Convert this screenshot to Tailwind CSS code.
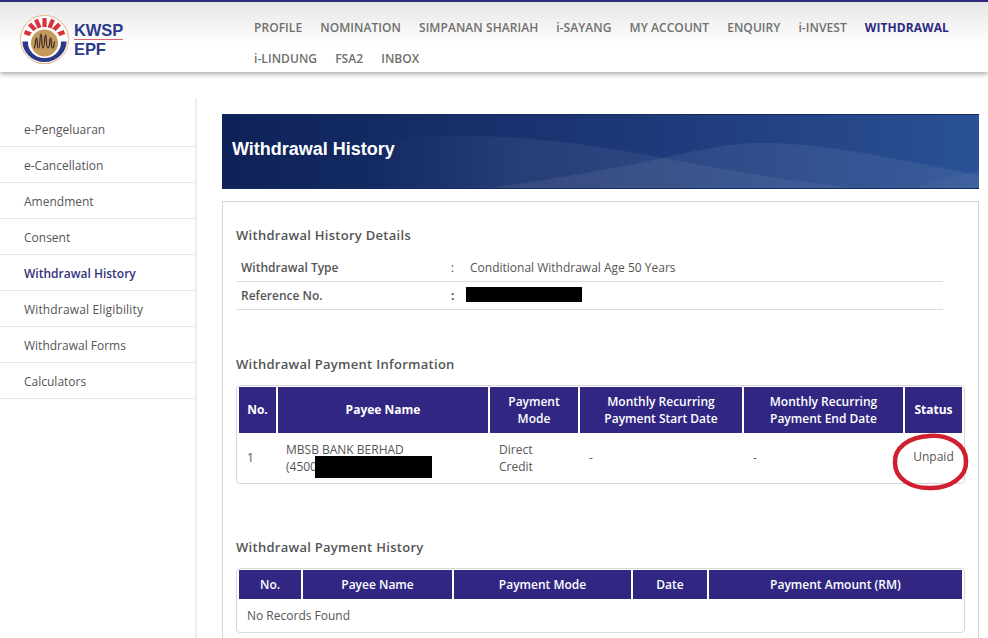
<!DOCTYPE html>
<html lang="en">
<head>
    <meta charset="UTF-8">
    <title>Withdrawal History</title>
    <script src="https://cdn.jsdelivr.net/npm/@tailwindcss/browser@4"></script>
</head>
<body class="bg-white h-[638px] overflow-hidden font-['Open_Sans','Noto_Sans',sans-serif] text-[12px] text-[#555]">
    <!-- header -->
    <header class="h-[72px] border-t-2 border-[#2e2a7f] bg-gradient-to-b from-[#e6e6e6] to-white to-60% shadow-[0_2px_5px_rgba(0,0,0,0.35)] flex">
        <div class="w-[254px] flex items-center pl-[20px] pt-[5px] gap-[5px]">
            <svg width="49" height="49" viewBox="0 0 49 49">
                <circle cx="24.5" cy="24.5" r="24.5" fill="#e9bf94"/>
                <circle cx="24.5" cy="24.5" r="23.3" fill="#fff"/>
                <g stroke="#d8343f" stroke-width="4.200">
                    <path d="M24.5 24.500V3"/>
                    <path d="M24.500 24.500L16 4.500M24.500 24.500L33 4.500"/>
                    <path d="M24.500 24.500L9.500 9M24.500 24.500L39.500 9"/>
                    <path d="M24.500 24.500L4.500 17M24.500 24.500L44.500 17"/>
                </g>
                <path d="M2.300 26.500a22.200 22.200 0 0 0 44.400 0z" fill="#2d3a8c"/>
                <circle cx="24.500" cy="24.500" r="23.300" fill="none" stroke="#fff" stroke-width="1.400"/>
                <circle cx="24.500" cy="24.500" r="24" fill="none" stroke="#e9bf94" stroke-width="1"/>
                <ellipse cx="24.500" cy="27.500" rx="16.500" ry="15.500" fill="#fff"/>
                <circle cx="24.500" cy="28" r="13.500" fill="#c49a5c"/>
                <path d="M14 33c2-1 1-10 2.500-10s0 10 2 10 1-14 2.500-14 0 14 2 14 1-13 2.500-13 0 13 2.500 13 1-10 2.500-10 0 10 2 10 1-7 2.500-6" fill="none" stroke="#3a2a2a" stroke-width="1.200"/>
            </svg>
            <div class="font-['Liberation_Sans',sans-serif] font-bold text-[#2d3a8c] text-[16.5px] leading-[19px] tracking-[-0.1px]">
                <div class="border-b border-[#d8606a] w-[49px] h-[19px]">KWSP</div>
                <div class="h-[19px]">EPF</div>
            </div>
        </div>
        <nav class="flex-1 text-[12px] font-semibold text-[#6f6f6f] pt-[17px] tracking-[0.06px]">
            <div class="flex gap-[18px] h-[31px]">
                <span>PROFILE</span><span>NOMINATION</span><span>SIMPANAN SHARIAH</span><span>i-SAYANG</span><span>MY ACCOUNT</span><span>ENQUIRY</span><span>i-INVEST</span><span class="text-[#2e2a7f] font-bold">WITHDRAWAL</span>
            </div>
            <div class="flex gap-[18px]">
                <span>i-LINDUNG</span><span>FSA2</span><span>INBOX</span>
            </div>
        </nav>
    </header>

    <div class="flex">
        <!-- sidebar -->
        <aside class="w-[197px] h-[540px] mt-[26px] border-r-2 border-[#eeeeee] pt-[13px] shrink-0">
            <a class="flex items-center h-[36px] pl-[24px] pt-[2px] border-b border-[#e6e6e6]">e-Pengeluaran</a>
            <a class="flex items-center h-[36px] pl-[24px] pt-[2px] border-b border-[#e6e6e6]">e-Cancellation</a>
            <a class="flex items-center h-[36px] pl-[24px] pt-[2px] border-b border-[#e6e6e6]">Amendment</a>
            <a class="flex items-center h-[36px] pl-[24px] pt-[2px] border-b border-[#e6e6e6]">Consent</a>
            <a class="flex items-center h-[36px] pl-[24px] pt-[2px] border-b border-[#e6e6e6] font-semibold text-[#33337a]">Withdrawal History</a>
            <a class="flex items-center h-[36px] pl-[24px] pt-[2px] border-b border-[#e6e6e6] tracking-[0.15px]">Withdrawal Eligibility</a>
            <a class="flex items-center h-[36px] pl-[24px] pt-[2px] border-b border-[#e6e6e6]">Withdrawal Forms</a>
            <a class="flex items-center h-[36px] pl-[24px] pt-[2px] border-b border-[#e6e6e6]">Calculators</a>
        </aside>

        <main class="w-[757px] ml-[25px] mt-[42px]">
            <!-- banner -->
            <div class="relative h-[75px] bg-gradient-to-r from-[#0e2258] via-[#1d3675] to-[#2a5196] border-y border-[#142a63] flex items-center pl-[10px] pb-[4px] overflow-hidden">
                <svg class="absolute inset-0" width="757" height="75" viewBox="0 0 757 75">
                    <defs>
                        <linearGradient id="waveFade">
                            <stop offset="0" stop-color="#fff" stop-opacity="0"/>
                            <stop offset="0.3" stop-color="#fff" stop-opacity="0.06"/>
                        </linearGradient>
                    </defs>
                    <path d="M150 26C200 20 250 20 300 23C350 27 400 35 441 43C510 56 580 68 650 75H150z" fill="url(#waveFade)"/>
                    <path d="M250 75C320 66 380 56 441 43C480 34 510 28 540 28C610 28 680 46 757 60V75z" fill="#fff" fill-opacity="0.07"/>
                    <path d="M680 75C710 68 735 60 757 56V75z" fill="#fff" fill-opacity="0.03"/>
                </svg>
                <h1 class="relative font-['Liberation_Sans',sans-serif] font-bold text-white text-[18px]">Withdrawal History</h1>
            </div>

            <!-- panel -->
            <div class="h-[460px] mt-[12px] border border-[#d4d4d4] pl-[13px] pr-[14px]">
                <h2 class="mt-[24px] font-semibold text-[13px] leading-[18px] tracking-[0.28px] text-[#555]">Withdrawal History Details</h2>
                <div class="mt-[10px] w-[707px]">
                    <div class="flex items-center h-[28px] border-b border-[#dddddd] pl-[5px]">
                        <span class="w-[210px] font-semibold text-[#555]">Withdrawal Type</span><span class="w-[19px]">:</span><span>Conditional Withdrawal Age 50 Years</span>
                    </div>
                    <div class="relative flex items-center h-[28px] border-b border-[#dddddd] pl-[5px]">
                        <span class="w-[210px] font-semibold text-[#555]">Reference No.</span><span class="font-bold">:</span>
                        <div class="absolute left-[230px] top-[5px] w-[116px] h-[15px] bg-black"></div>
                    </div>
                </div>

                <h2 class="mt-[45px] font-semibold text-[13px] leading-[18px] tracking-[0.28px] text-[#555]">Withdrawal Payment Information</h2>
                <div class="relative mt-[12px] w-[729px] h-[99px] border border-[#d8d8d8] rounded-[4px] px-[2px] pt-[1px]">
                    <div class="flex gap-[2px] h-[46px] text-white font-semibold text-center leading-[17px]">
                        <div class="w-[37px] pb-[2px] bg-[#312783] flex items-center justify-center font-bold">No.</div>
                        <div class="w-[210px] pb-[2px] bg-[#312783] flex items-center justify-center font-bold">Payee Name</div>
                        <div class="w-[88px] bg-[#312783] flex items-center justify-center">Payment<br>Mode</div>
                        <div class="w-[162px] bg-[#312783] flex items-center justify-center">Monthly Recurring<br>Payment Start Date</div>
                        <div class="w-[159px] bg-[#312783] flex items-center justify-center">Monthly Recurring<br>Payment End Date</div>
                        <div class="w-[57px] pb-[2px] bg-[#312783] flex items-center justify-center font-bold">Status</div>
                    </div>
                    <div class="flex gap-[2px] h-[50px] items-center leading-[17px]">
                        <div class="w-[37px] pl-[8px] pb-[2px]">1</div>
                        <div class="w-[210px] pl-[8px]">MBSB BANK BERHAD<br>(4500</div>
                        <div class="w-[88px] pl-[9px]">Direct<br>Credit</div>
                        <div class="w-[162px] pl-[9px] pb-[2px]">-</div>
                        <div class="w-[159px] pl-[9px] pb-[2px]">-</div>
                        <div class="w-[57px] text-center pb-[3px]">Unpaid</div>
                    </div>
                    <div class="absolute left-[78px] top-[70px] w-[117px] h-[22px] bg-black"></div>
                    <svg class="absolute left-[653px] top-[46px]" width="80" height="60" viewBox="0 0 80 60">
                        <path d="M38 4C58 2 76 12 76 29C77 45 60 56 42 56C20 57 5 46 5 31C4 16 18 5 40 4" fill="none" stroke="#d01f2e" stroke-width="4.500"/>
                    </svg>
                </div>

                <h2 class="mt-[54px] font-semibold text-[13px] leading-[18px] tracking-[0.28px] text-[#555]">Withdrawal Payment History</h2>
                <div class="mt-[12px] w-[729px] h-[65px] border border-[#d8d8d8] rounded-[4px] px-[2px] pt-[1px]">
                    <div class="flex gap-[2px] h-[29px] text-white font-semibold text-center">
                        <div class="w-[62px] bg-[#312783] flex items-center justify-center">No.</div>
                        <div class="w-[149px] bg-[#312783] flex items-center justify-center">Payee Name</div>
                        <div class="w-[177px] bg-[#312783] flex items-center justify-center">Payment Mode</div>
                        <div class="w-[74px] bg-[#312783] flex items-center justify-center">Date</div>
                        <div class="w-[253px] bg-[#312783] flex items-center justify-center">Payment Amount (RM)</div>
                    </div>
                    <div class="flex items-center h-[32px] pl-[8px] pt-[2px]">No Records Found</div>
                </div>
            </div>
        </main>
    </div>
</body>
</html>
